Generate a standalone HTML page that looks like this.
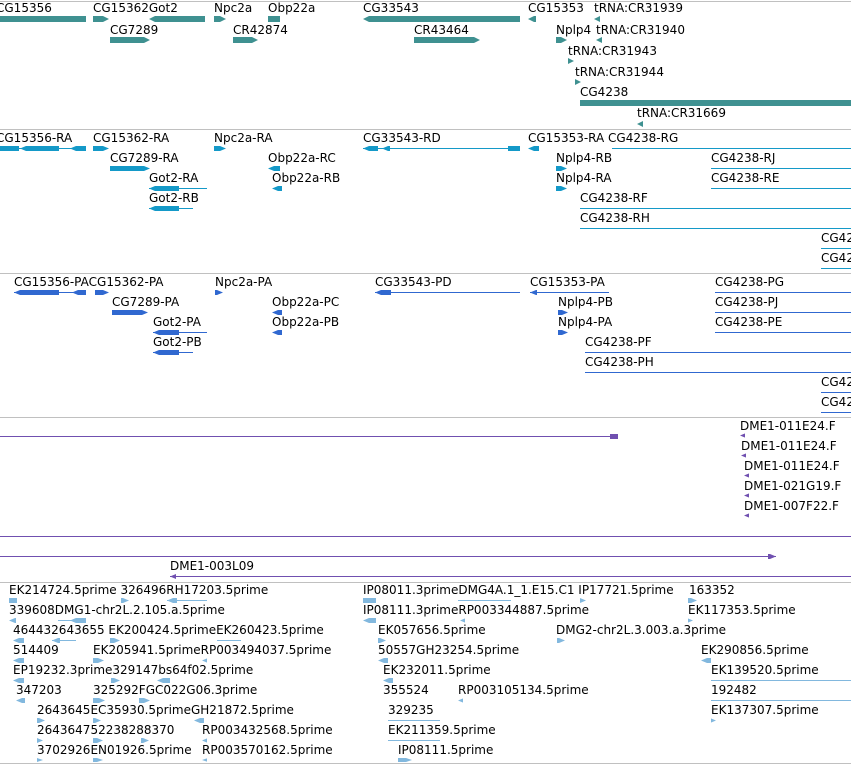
<!DOCTYPE html>
<html><head><meta charset="utf-8"><style>
body{margin:0;width:851px;height:765px;overflow:hidden;background:#fff;position:relative;font-family:"DejaVu Sans","Liberation Sans",sans-serif;font-size:12px;color:#000}
.l{position:absolute;line-height:14px;white-space:nowrap}
.g{position:absolute;height:1px}
.s{position:absolute;height:1px;background:#c0c0c0;left:0;width:851px}
.t{background:#3f9191}
.c{background:#1499c8}
.p{background:#3068d0}
.v{background:#7050b0}
.e{background:#82b8de}
.R{clip-path:polygon(0 0,calc(100% - 6px) 0,100% 50%,calc(100% - 6px) 100%,0 100%)}
.L{clip-path:polygon(6px 0,100% 0,100% 100%,6px 100%,0 50%)}
</style></head><body>
<div class="s" style="top:1px"></div><div class="s" style="top:129px"></div><div class="s" style="top:273px"></div><div class="s" style="top:417px"></div><div class="s" style="top:582px"></div><div class="s" style="top:763px"></div>

<div class="l" style="left:-4px;top:1px">CG15356</div><div class="g t" style="left:0;top:16px;width:86px;height:6px"></div>
<div class="l" style="left:93px;top:1px">CG15362Got2</div><div class="g t R" style="left:93px;top:16px;width:16px;height:6px"></div><div class="g t L" style="left:149px;top:16px;width:56px;height:6px"></div>
<div class="l" style="left:214px;top:1px">Npc2a</div><div class="g t R" style="left:214px;top:16px;width:12px;height:6px"></div>
<div class="l" style="left:268px;top:1px">Obp22a</div><div class="g t" style="left:268px;top:16px;width:12px;height:6px"></div>
<div class="l" style="left:363px;top:1px">CG33543</div><div class="g t L" style="left:363px;top:16px;width:157px;height:6px"></div>
<div class="l" style="left:528px;top:1px">CG15353</div><div class="g t L" style="left:528px;top:16px;width:8px;height:6px"></div>
<div class="l" style="left:594px;top:1px">tRNA:CR31939</div><div class="g t L" style="left:594px;top:16px;width:6px;height:6px"></div>
<div class="l" style="left:110px;top:23px">CG7289</div><div class="g t R" style="left:110px;top:37px;width:40px;height:6px"></div>
<div class="l" style="left:233px;top:23px">CR42874</div><div class="g t R" style="left:233px;top:37px;width:25px;height:6px"></div>
<div class="l" style="left:414px;top:23px">CR43464</div><div class="g t R" style="left:414px;top:37px;width:66px;height:6px"></div>
<div class="l" style="left:556px;top:23px">Nplp4</div><div class="g t R" style="left:556px;top:37px;width:11px;height:6px"></div>
<div class="l" style="left:596px;top:23px">tRNA:CR31940</div><div class="g t L" style="left:596px;top:37px;width:6px;height:6px"></div>
<div class="l" style="left:568px;top:44px">tRNA:CR31943</div><div class="g t R" style="left:568px;top:58px;width:6px;height:6px"></div>
<div class="l" style="left:575px;top:65px">tRNA:CR31944</div><div class="g t R" style="left:575px;top:79px;width:6px;height:6px"></div>
<div class="l" style="left:580px;top:85px">CG4238</div><div class="g t" style="left:580px;top:100px;width:271px;height:6px"></div>
<div class="l" style="left:637px;top:106px">tRNA:CR31669</div><div class="g t L" style="left:637px;top:121px;width:6px;height:6px"></div>

<div class="l" style="left:-4px;top:131px">CG15356-RA</div><div class="g c" style="left:0;top:148px;width:86px"></div><div class="g c" style="left:0;top:146px;width:19px;height:5px"></div><div class="g c L" style="left:20px;top:146px;width:39px;height:5px"></div><div class="g c L" style="left:70px;top:146px;width:16px;height:5px"></div>
<div class="l" style="left:93px;top:131px">CG15362-RA</div><div class="g c R" style="left:93px;top:146px;width:16px;height:5px"></div>
<div class="l" style="left:214px;top:131px">Npc2a-RA</div><div class="g c R" style="left:214px;top:146px;width:12px;height:5px"></div>
<div class="l" style="left:363px;top:131px">CG33543-RD</div><div class="g c" style="left:363px;top:148px;width:157px"></div><div class="g c L" style="left:363px;top:146px;width:15px;height:5px"></div><div class="g c L" style="left:382px;top:146px;width:8px;height:5px"></div><div class="g c" style="left:508px;top:146px;width:12px;height:5px"></div>
<div class="l" style="left:528px;top:131px">CG15353-RA CG4238-RG</div><div class="g c L" style="left:528px;top:146px;width:11px;height:5px"></div><div class="g c" style="left:612px;top:148px;width:239px"></div>
<div class="l" style="left:110px;top:151px">CG7289-RA</div><div class="g c R" style="left:110px;top:166px;width:40px;height:5px"></div>
<div class="l" style="left:268px;top:151px">Obp22a-RC</div><div class="g c L" style="left:268px;top:166px;width:12px;height:5px"></div>
<div class="l" style="left:556px;top:151px">Nplp4-RB</div><div class="g c R" style="left:556px;top:166px;width:11px;height:5px"></div>
<div class="l" style="left:711px;top:151px">CG4238-RJ</div><div class="g c" style="left:711px;top:168px;width:140px"></div>
<div class="l" style="left:149px;top:171px">Got2-RA</div><div class="g c" style="left:149px;top:188px;width:58px"></div><div class="g c L" style="left:149px;top:186px;width:30px;height:5px"></div>
<div class="l" style="left:272px;top:171px">Obp22a-RB</div><div class="g c L" style="left:272px;top:186px;width:10px;height:5px"></div>
<div class="l" style="left:556px;top:171px">Nplp4-RA</div><div class="g c R" style="left:556px;top:186px;width:11px;height:5px"></div>
<div class="l" style="left:711px;top:171px">CG4238-RE</div><div class="g c" style="left:711px;top:188px;width:140px"></div>
<div class="l" style="left:149px;top:191px">Got2-RB</div><div class="g c" style="left:149px;top:208px;width:44px"></div><div class="g c L" style="left:149px;top:206px;width:30px;height:5px"></div>
<div class="l" style="left:580px;top:191px">CG4238-RF</div><div class="g c" style="left:580px;top:208px;width:271px"></div>
<div class="l" style="left:580px;top:211px">CG4238-RH</div><div class="g c" style="left:580px;top:228px;width:271px"></div>
<div class="l" style="left:821px;top:231px">CG4238-RK</div><div class="g c" style="left:821px;top:248px;width:30px"></div>
<div class="l" style="left:821px;top:251px">CG4238-RL</div><div class="g c" style="left:821px;top:268px;width:30px"></div>

<div class="l" style="left:14px;top:275px">CG15356-PACG15362-PA</div><div class="g p" style="left:14px;top:292px;width:72px"></div><div class="g p L" style="left:14px;top:290px;width:45px;height:5px"></div><div class="g p L" style="left:72px;top:290px;width:14px;height:5px"></div><div class="g p R" style="left:95px;top:290px;width:14px;height:5px"></div>
<div class="l" style="left:215px;top:275px">Npc2a-PA</div><div class="g p R" style="left:215px;top:290px;width:8px;height:5px"></div>
<div class="l" style="left:375px;top:275px">CG33543-PD</div><div class="g p" style="left:375px;top:292px;width:145px"></div><div class="g p L" style="left:375px;top:290px;width:16px;height:5px"></div>
<div class="l" style="left:530px;top:275px">CG15353-PA</div><div class="g p" style="left:530px;top:292px;width:79px"></div><div class="g p L" style="left:530px;top:290px;width:7px;height:5px"></div>
<div class="l" style="left:715px;top:275px">CG4238-PG</div><div class="g p" style="left:715px;top:292px;width:136px"></div>
<div class="l" style="left:112px;top:295px">CG7289-PA</div><div class="g p R" style="left:112px;top:310px;width:36px;height:5px"></div>
<div class="l" style="left:272px;top:295px">Obp22a-PC</div><div class="g p L" style="left:272px;top:310px;width:10px;height:5px"></div>
<div class="l" style="left:558px;top:295px">Nplp4-PB</div><div class="g p R" style="left:558px;top:310px;width:10px;height:5px"></div>
<div class="l" style="left:715px;top:295px">CG4238-PJ</div><div class="g p" style="left:715px;top:312px;width:136px"></div>
<div class="l" style="left:153px;top:315px">Got2-PA</div><div class="g p" style="left:153px;top:332px;width:54px"></div><div class="g p L" style="left:153px;top:330px;width:26px;height:5px"></div>
<div class="l" style="left:272px;top:315px">Obp22a-PB</div><div class="g p L" style="left:272px;top:330px;width:10px;height:5px"></div>
<div class="l" style="left:558px;top:315px">Nplp4-PA</div><div class="g p R" style="left:558px;top:330px;width:10px;height:5px"></div>
<div class="l" style="left:715px;top:315px">CG4238-PE</div><div class="g p" style="left:715px;top:332px;width:136px"></div>
<div class="l" style="left:153px;top:335px">Got2-PB</div><div class="g p" style="left:153px;top:352px;width:40px"></div><div class="g p L" style="left:153px;top:350px;width:26px;height:5px"></div>
<div class="l" style="left:585px;top:335px">CG4238-PF</div><div class="g p" style="left:585px;top:352px;width:266px"></div>
<div class="l" style="left:585px;top:355px">CG4238-PH</div><div class="g p" style="left:585px;top:372px;width:266px"></div>
<div class="l" style="left:821px;top:375px">CG4238-PK</div><div class="g p" style="left:821px;top:392px;width:30px"></div>
<div class="l" style="left:821px;top:395px">CG4238-PL</div><div class="g p" style="left:821px;top:412px;width:30px"></div>

<div class="g v" style="left:0;top:436px;width:615px"></div><div class="g v" style="left:610px;top:434px;width:8px;height:5px"></div>
<div class="l" style="left:740px;top:419px">DME1-011E24.F</div><div class="g v L" style="left:740px;top:433px;width:5px;height:5px"></div>
<div class="l" style="left:741px;top:439px">DME1-011E24.F</div><div class="g v L" style="left:741px;top:453px;width:5px;height:5px"></div>
<div class="l" style="left:744px;top:459px">DME1-011E24.F</div><div class="g v L" style="left:744px;top:473px;width:5px;height:5px"></div>
<div class="l" style="left:744px;top:479px">DME1-021G19.F</div><div class="g v L" style="left:744px;top:493px;width:5px;height:5px"></div>
<div class="l" style="left:744px;top:499px">DME1-007F22.F</div><div class="g v L" style="left:744px;top:513px;width:5px;height:5px"></div>
<div class="g v" style="left:0;top:536px;width:851px"></div>
<div class="g v" style="left:0;top:556px;width:776px"></div><div class="g v R" style="left:768px;top:554px;width:8px;height:5px"></div>
<div class="l" style="left:170px;top:559px">DME1-003L09</div>
<div class="g v" style="left:170px;top:576px;width:681px"></div><div class="g v L" style="left:170px;top:574px;width:6px;height:5px"></div>

<div class="l" style="left:9px;top:583px">EK214724.5prime 326496RH17203.5prime</div>
<div class="g e" style="left:9px;top:598px;width:8px;height:5px"></div><div class="g e R" style="left:121px;top:598px;width:8px;height:5px"></div><div class="g e" style="left:167px;top:600px;width:40px"></div><div class="g e L" style="left:167px;top:598px;width:10px;height:5px"></div>
<div class="l" style="left:363px;top:583px">IP08011.3primeDMG4A.1_1.E15.C1 IP17721.5prime</div><div class="l" style="left:689px;top:583px">163352</div>
<div class="g e" style="left:363px;top:598px;width:13px;height:5px"></div><div class="g e" style="left:458px;top:600px;width:53px"></div><div class="g e R" style="left:580px;top:598px;width:6px;height:5px"></div><div class="g e R" style="left:688px;top:598px;width:9px;height:5px"></div>
<div class="l" style="left:9px;top:603px">339608DMG1-chr2L.2.105.a.5prime</div><div class="l" style="left:363px;top:603px">IP08111.3primeRP003344887.5prime</div><div class="l" style="left:688px;top:603px">EK117353.5prime</div>
<div class="g e L" style="left:9px;top:618px;width:7px;height:5px"></div><div class="g e" style="left:58px;top:620px;width:28px"></div><div class="g e L" style="left:70px;top:618px;width:16px;height:5px"></div><div class="g e L" style="left:363px;top:618px;width:13px;height:5px"></div><div class="g e L" style="left:460px;top:618px;width:5px;height:5px"></div><div class="g e R" style="left:688px;top:618px;width:5px;height:5px"></div>
<div class="l" style="left:13px;top:623px">464432643655 EK200424.5primeEK260423.5prime</div><div class="l" style="left:378px;top:623px">EK057656.5prime</div><div class="l" style="left:556px;top:623px">DMG2-chr2L.3.003.a.3prime</div>
<div class="g e L" style="left:13px;top:638px;width:11px;height:5px"></div><div class="g e" style="left:52px;top:640px;width:24px"></div><div class="g e L" style="left:52px;top:638px;width:8px;height:5px"></div><div class="g e R" style="left:110px;top:638px;width:10px;height:5px"></div><div class="g e" style="left:217px;top:640px;width:24px"></div><div class="g e R" style="left:378px;top:638px;width:8px;height:5px"></div><div class="g e R" style="left:557px;top:638px;width:8px;height:5px"></div>
<div class="l" style="left:13px;top:643px">514409</div><div class="l" style="left:93px;top:643px">EK205941.5primeRP003494037.5prime</div><div class="l" style="left:378px;top:643px">50557GH23254.5prime</div><div class="l" style="left:701px;top:643px">EK290856.5prime</div>
<div class="g e L" style="left:13px;top:658px;width:11px;height:5px"></div><div class="g e R" style="left:93px;top:658px;width:11px;height:5px"></div><div class="g e L" style="left:202px;top:658px;width:5px;height:5px"></div><div class="g e L" style="left:378px;top:658px;width:10px;height:5px"></div><div class="g e L" style="left:701px;top:658px;width:10px;height:5px"></div>
<div class="l" style="left:13px;top:663px">EP19232.3prime329147bs64f02.5prime</div><div class="l" style="left:383px;top:663px">EK232011.5prime</div><div class="l" style="left:711px;top:663px">EK139520.5prime</div>
<div class="g e L" style="left:13px;top:678px;width:11px;height:5px"></div><div class="g e R" style="left:111px;top:678px;width:9px;height:5px"></div><div class="g e L" style="left:157px;top:678px;width:13px;height:5px"></div><div class="g e L" style="left:383px;top:678px;width:10px;height:5px"></div><div class="g e" style="left:711px;top:680px;width:140px"></div>
<div class="l" style="left:16px;top:683px">347203</div><div class="l" style="left:93px;top:683px">325292FGC022G06.3prime</div><div class="l" style="left:383px;top:683px">355524</div><div class="l" style="left:458px;top:683px">RP003105134.5prime</div><div class="l" style="left:711px;top:683px">192482</div>
<div class="g e L" style="left:16px;top:698px;width:9px;height:5px"></div><div class="g e R" style="left:93px;top:698px;width:12px;height:5px"></div><div class="g e R" style="left:139px;top:698px;width:11px;height:5px"></div><div class="g e L" style="left:458px;top:698px;width:5px;height:5px"></div><div class="g e" style="left:711px;top:700px;width:140px"></div>
<div class="l" style="left:37px;top:703px">2643645EC35930.5primeGH21872.5prime</div><div class="l" style="left:388px;top:703px">329235</div><div class="l" style="left:711px;top:703px">EK137307.5prime</div>
<div class="g e R" style="left:37px;top:718px;width:8px;height:5px"></div><div class="g e R" style="left:93px;top:718px;width:8px;height:5px"></div><div class="g e L" style="left:194px;top:718px;width:10px;height:5px"></div><div class="g e" style="left:388px;top:720px;width:52px"></div><div class="g e R" style="left:711px;top:718px;width:5px;height:5px"></div>
<div class="l" style="left:37px;top:723px">264364752238288370</div><div class="l" style="left:202px;top:723px">RP003432568.5prime</div><div class="l" style="left:388px;top:723px">EK211359.5prime</div>
<div class="g e R" style="left:37px;top:738px;width:6px;height:5px"></div><div class="g e R" style="left:93px;top:738px;width:10px;height:5px"></div><div class="g e R" style="left:141px;top:738px;width:8px;height:5px"></div><div class="g e L" style="left:202px;top:738px;width:5px;height:5px"></div><div class="g e" style="left:388px;top:740px;width:52px"></div>
<div class="l" style="left:37px;top:743px">3702926EN01926.5prime</div><div class="l" style="left:202px;top:743px">RP003570162.5prime</div><div class="l" style="left:398px;top:743px">IP08111.5prime</div>
<div class="g e R" style="left:37px;top:758px;width:6px;height:4px"></div><div class="g e R" style="left:93px;top:758px;width:10px;height:4px"></div><div class="g e L" style="left:202px;top:758px;width:5px;height:4px"></div><div class="g e R" style="left:398px;top:758px;width:14px;height:4px"></div>
</body></html>
